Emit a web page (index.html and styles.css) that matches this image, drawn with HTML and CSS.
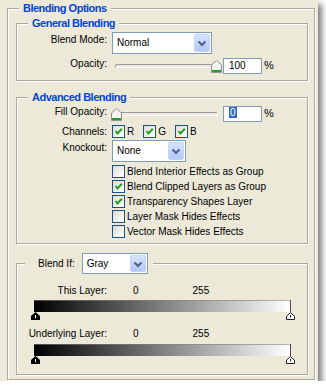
FILE: index.html
```html
<!DOCTYPE html>
<html>
<head>
<meta charset="utf-8">
<link rel="stylesheet" href="styles.css">
</head>
<body>
<div class="dialog">
  <fieldset class="group group--outer">
    <legend class="group__title">Blending Options</legend>

    <fieldset class="group group--inner group--general">
      <legend class="group__title">General Blending</legend>
      <div class="row row--select row--mode">
        <span class="label">Blend Mode:</span>
        <div class="combo combo--mode">
          <span class="combo__text">Normal</span>
          <span class="combo__btn"><svg width="14" height="16" viewBox="0 0 14 16"><polyline points="3.5,6.5 7,10 10.5,6.5" fill="none" stroke="#4D6185" stroke-width="2"/></svg></span>
        </div>
      </div>
      <div class="row row--slider row--opacity">
        <span class="label">Opacity:</span>
        <div class="slider">
          <div class="slider__track"></div>
          <svg class="slider__thumb slider__thumb--max" width="11" height="13" viewBox="0 0 11 13"><path d="M5.5 0.5 L10.5 5 V12.5 H0.5 V5 Z" fill="#F4F4F0" stroke="#8E8F8F"/><rect x="1" y="10" width="9" height="2" fill="#21A121"/></svg>
        </div>
        <div class="field">100</div>
        <span class="pct">%</span>
      </div>
    </fieldset>

    <fieldset class="group group--inner group--advanced">
      <legend class="group__title">Advanced Blending</legend>
      <div class="row row--slider row--fill">
        <span class="label">Fill Opacity:</span>
        <div class="slider">
          <div class="slider__track"></div>
          <svg class="slider__thumb slider__thumb--min" width="11" height="13" viewBox="0 0 11 13"><path d="M5.5 0.5 L10.5 5 V12.5 H0.5 V5 Z" fill="#F4F4F0" stroke="#8E8F8F"/><rect x="1" y="10" width="9" height="2" fill="#21A121"/></svg>
        </div>
        <div class="field"><span class="field__sel">0</span></div>
        <span class="pct">%</span>
      </div>
      <div class="row row--channels">
        <span class="label">Channels:</span>
        <div class="channels">
          <span class="opt"><span class="check"><svg width="11" height="11" viewBox="0 0 11 11"><polyline points="2.5,5 4.5,7.5 8.8,2.8" fill="none" stroke="#21A121" stroke-width="2"/></svg></span>R</span>
          <span class="opt"><span class="check"><svg width="11" height="11" viewBox="0 0 11 11"><polyline points="2.5,5 4.5,7.5 8.8,2.8" fill="none" stroke="#21A121" stroke-width="2"/></svg></span>G</span>
          <span class="opt"><span class="check"><svg width="11" height="11" viewBox="0 0 11 11"><polyline points="2.5,5 4.5,7.5 8.8,2.8" fill="none" stroke="#21A121" stroke-width="2"/></svg></span>B</span>
        </div>
      </div>
      <div class="row row--select row--knockout">
        <span class="label">Knockout:</span>
        <div class="combo combo--knockout">
          <span class="combo__text">None</span>
          <span class="combo__btn"><svg width="14" height="16" viewBox="0 0 14 16"><polyline points="3.5,6.5 7,10 10.5,6.5" fill="none" stroke="#4D6185" stroke-width="2"/></svg></span>
        </div>
      </div>
      <div class="options">
        <span class="opt"><span class="check"></span>Blend Interior Effects as Group</span>
        <span class="opt"><span class="check"><svg width="11" height="11" viewBox="0 0 11 11"><polyline points="2.5,5 4.5,7.5 8.8,2.8" fill="none" stroke="#21A121" stroke-width="2"/></svg></span>Blend Clipped Layers as Group</span>
        <span class="opt"><span class="check"><svg width="11" height="11" viewBox="0 0 11 11"><polyline points="2.5,5 4.5,7.5 8.8,2.8" fill="none" stroke="#21A121" stroke-width="2"/></svg></span>Transparency Shapes Layer</span>
        <span class="opt"><span class="check"></span>Layer Mask Hides Effects</span>
        <span class="opt"><span class="check"></span>Vector Mask Hides Effects</span>
      </div>
    </fieldset>

    <fieldset class="group group--inner group--blendif">
      <legend class="blendif__legend">
        <span class="blendif__head">
          <span class="blendif__label">Blend If:</span>
          <span class="combo combo--gray">
            <span class="combo__text">Gray</span>
            <span class="combo__btn"><svg width="14" height="16" viewBox="0 0 14 16"><polyline points="3.5,6.5 7,10 10.5,6.5" fill="none" stroke="#4D6185" stroke-width="2"/></svg></span>
          </span>
        </span>
      </legend>
      <div class="level level--this">
        <span class="label">This Layer:</span>
        <span class="level__lo">0</span>
        <span class="level__hi">255</span>
      </div>
      <div class="ramp"></div>
      <div class="ramp-thumbs">
        <svg width="9" height="8" viewBox="0 0 9 8"><path d="M4.5 0 L9 4 V8 H0 V4 Z" fill="#000"/><rect x="4" y="3" width="1" height="3" fill="#fff"/></svg>
        <svg width="9" height="8" viewBox="0 0 9 8"><path d="M4.5 0.6 L8.5 4.2 V7.5 H0.5 V4.2 Z" fill="#fff" stroke="#222"/><rect x="4" y="3" width="1" height="2.5" fill="#222"/></svg>
      </div>
      <div class="level level--under">
        <span class="label">Underlying Layer:</span>
        <span class="level__lo">0</span>
        <span class="level__hi">255</span>
      </div>
      <div class="ramp ramp--under"></div>
      <div class="ramp-thumbs">
        <svg width="9" height="8" viewBox="0 0 9 8"><path d="M4.5 0 L9 4 V8 H0 V4 Z" fill="#000"/><rect x="4" y="3" width="1" height="3" fill="#fff"/></svg>
        <svg width="9" height="8" viewBox="0 0 9 8"><path d="M4.5 0.6 L8.5 4.2 V7.5 H0.5 V4.2 Z" fill="#fff" stroke="#222"/><rect x="4" y="3" width="1" height="2.5" fill="#222"/></svg>
      </div>
    </fieldset>
  </fieldset>
</div>
</body>
</html>
```

FILE: styles.css
```css
* { box-sizing: border-box; }

body {
  margin: 0;
  background: #fff;
  font-family: "Liberation Sans", Arial, sans-serif;
  font-size: 10px;
  color: #000;
}

.dialog {
  width: 318px;
  height: 381px;
  background: #ECE9D8;
  padding: 1px 0 0 7px;
  box-shadow: 4px 4px 6px rgba(0, 0, 0, 0.5);
}

.group {
  margin: 0;
  padding: 0;
  min-width: 0;
  border: 1px solid #ACA899;
  box-shadow: inset 1px 1px 0 #fff, 1px 1px 0 #fff;
}

.group--outer {
  width: 308px;
  height: 379px;
}

.group__title {
  margin-left: 11px;
  padding: 0 4px;
  font-weight: bold;
  font-size: 11px;
  letter-spacing: -0.5px;
  line-height: 15px;
  color: #0046D5;
  background: #ECE9D8;
}

.group--inner {
  width: 292px;
  margin-left: 8px;
}

.group--general { padding-bottom: 6px; }
.group--advanced { margin-top: 9px; padding-bottom: 5px; }
.group--blendif { margin-top: 9px; padding-bottom: 10px; }

.row {
  display: flex;
  align-items: flex-start;
}

.label {
  flex: none;
  width: 90px;
  margin-right: 5px;
  text-align: right;
  line-height: 12px;
  white-space: nowrap;
}

.row--select { height: 22px; }
.row--select .label { padding-top: 2px; }
.row--mode { margin-top: 1px; }
.row--opacity { margin-top: 4px; height: 16px; }
.row--fill { margin-top: 1px; height: 16px; }
.row--channels { margin-top: 3px; height: 13px; align-items: center; }
.row--knockout { margin-top: 2px; }

/* combo box */
.combo {
  display: flex;
  align-items: center;
  justify-content: space-between;
  height: 22px;
  padding: 1px;
  border: 1px solid #7F9DB9;
  background: #fff;
}
.combo--mode { width: 100px; }
.combo--knockout { width: 74px; }
.combo--gray { width: 66px; height: 21px; }

.combo__text { padding-left: 3px; line-height: 12px; }

.combo__btn {
  display: flex;
  align-items: center;
  justify-content: center;
  width: 16px;
  height: 18px;
  border: 1px solid #C3D3FD;
  border-radius: 2px;
  background: linear-gradient(#D6E2FE, #B3C7F6);
}
.combo--gray .combo__btn { height: 17px; }

/* slider */
.slider {
  position: relative;
  flex: none;
  width: 111px;
  height: 16px;
  margin-left: -1px;
}
.slider__track {
  margin: 6px 4px 0;
  height: 4px;
  border: 1px solid;
  border-color: #9D9C99 #fff #fff #9D9C99;
  border-radius: 2px;
  background: #EEEDE5;
}
.slider__thumb {
  position: absolute;
  top: 2px;
}
.slider__thumb--max { right: 0; }
.slider__thumb--min { left: 0; }

.field {
  flex: none;
  width: 39px;
  height: 16px;
  margin-left: 1px;
  padding-left: 5px;
  border: 1px solid #7F9DB9;
  background: #fff;
  line-height: 14px;
}
.field__sel {
  display: inline-block;
  padding: 0 1px;
  background: #316AC5;
  color: #fff;
  line-height: 11px;
  vertical-align: 1px;
}

.pct {
  margin-left: 2px;
  font-size: 11px;
  line-height: 14px;
}

/* checkboxes */
.check {
  flex: none;
  display: flex;
  align-items: center;
  justify-content: center;
  width: 13px;
  height: 13px;
  border: 1px solid #1C5180;
  background: linear-gradient(135deg, #DCDCD7, #fff);
}

.opt {
  display: flex;
  align-items: center;
  gap: 2px;
  height: 13px;
  white-space: nowrap;
}

.channels {
  display: flex;
  gap: 9px;
}

.options {
  display: flex;
  flex-direction: column;
  gap: 2px;
  margin: 3px 0 0 95px;
}

/* blend if */
.blendif__legend {
  margin-left: 8px;
  padding: 0 5px 0 13px;
  background: #ECE9D8;
}
.blendif__head {
  display: flex;
  align-items: center;
}
.blendif__label {
  margin-right: 7px;
  line-height: 12px;
}

.level {
  display: flex;
  line-height: 14px;
  margin-top: 10px;
}
.level--under { margin-top: 7px; }
.level .label { line-height: 14px; margin-right: 0; }
.level__lo { margin-left: 26px; }
.level__hi { margin-left: 54px; }

.ramp {
  margin: 2px 0 0 17px;
  width: 257px;
  height: 12px;
  background: linear-gradient(to right, #000, #fff);
  border-top: 1px solid rgba(128, 128, 128, 0.6);
  border-right: 1px solid rgba(128, 128, 128, 0.6);
}
.ramp--under { margin-top: 3px; }

.ramp-thumbs {
  display: flex;
  justify-content: space-between;
  width: 264px;
  height: 8px;
  margin-left: 14px;
}
.ramp-thumbs svg { display: block; }
```
